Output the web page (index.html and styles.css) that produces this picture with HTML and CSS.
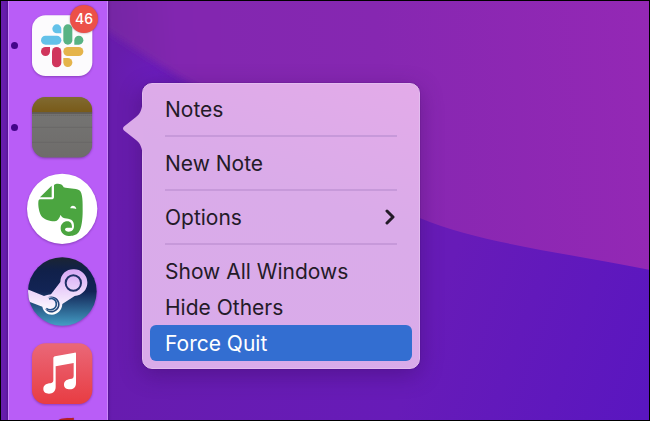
FILE: index.html
```html
<!DOCTYPE html>
<html lang="en">
<head>
<meta charset="utf-8">
<title>Desktop</title>
<link rel="stylesheet" href="styles.css">
</head>
<body>
<main class="desktop">
  <svg class="wallpaper" viewBox="0 0 650 421" preserveAspectRatio="none" aria-hidden="true">
    <defs>
      <linearGradient id="low" gradientUnits="userSpaceOnUse" x1="100" y1="200" x2="650" y2="400">
        <stop offset="0" stop-color="#671cac"/><stop offset="0.6" stop-color="#671bb8"/><stop offset="1" stop-color="#5a16c0"/>
      </linearGradient>
      <linearGradient id="high" gradientUnits="userSpaceOnUse" x1="100" y1="40" x2="650" y2="0">
        <stop offset="0" stop-color="#7326a2"/><stop offset="0.14" stop-color="#8227b0"/><stop offset="0.5" stop-color="#8627b1"/><stop offset="1" stop-color="#9428b5"/>
      </linearGradient>
      <radialGradient id="glow"><stop offset="0" stop-color="#6a1cba"/><stop offset="1" stop-color="#6a1cba" stop-opacity="0"/></radialGradient>
      <filter id="soft" x="-10%" y="-10%" width="120%" height="120%"><feGaussianBlur stdDeviation="4"/></filter>
    </defs>
    <rect width="650" height="421" fill="url(#low)"/>
    <ellipse cx="155" cy="72" rx="45" ry="35" fill="url(#glow)"/>
    <path d="M60 5C105 25 145 58 200 88C280 150 360 185 390 195L660 200V-30H60Z" fill="url(#high)" filter="url(#soft)"/>
    <path d="M220 80C290 150 360 190 420 218C480 243 560 252 650 270V0H220Z" fill="url(#high)"/>
  </svg>

  <nav class="dock" aria-label="Dock">
    <a class="app" href="#" aria-label="Slack">
      <span class="dot"></span>
      <svg class="icon" viewBox="63 12 246 246">
        <rect x="96" y="46" width="181" height="182" rx="41" fill="#fcfbfd"/>
        <g fill="#63c1e9"><path d="M184 100H170.500A13.500 13.500 0 1 1 184 86.500Z"/><rect x="123" y="107" width="61" height="27" rx="13.500"/></g>
        <g fill="#58b384"><rect x="190" y="73" width="27" height="61" rx="13.500"/><path d="M223 134V120.500A13.500 13.500 0 1 1 236.500 134Z"/></g>
        <g fill="#e5b44b"><rect x="190" y="141" width="60" height="27" rx="13.500"/><path d="M190 174H203.500A13.500 13.500 0 1 1 190 187.500Z"/></g>
        <g fill="#d0355c"><rect x="156" y="141" width="28" height="61" rx="14"/><path d="M150 141V154.500A13.500 13.500 0 1 1 136.500 141Z"/></g>
      </svg>
      <span class="badge">46</span>
    </a>
    <a class="app" href="#" aria-label="Notes">
      <span class="dot"></span>
      <svg class="icon" viewBox="63 3 246 246">
        <defs>
          <clipPath id="note"><rect x="96" y="36" width="181" height="182" rx="41"/></clipPath>
          <linearGradient id="brown" x1="0" y1="0" x2="0" y2="1"><stop offset="0" stop-color="#806a31"/><stop offset="1" stop-color="#795a18"/></linearGradient>
          <linearGradient id="paper" x1="0" y1="0" x2="0" y2="1"><stop offset="0" stop-color="#777776"/><stop offset="1" stop-color="#6e6c6a"/></linearGradient>
        </defs>
        <g clip-path="url(#note)">
          <rect x="96" y="36" width="181" height="182" fill="url(#paper)"/>
          <rect x="96" y="36" width="181" height="46" fill="url(#brown)"/>
          <path d="M96 84H277" stroke="#5d5751" stroke-width="4"/>
          <path d="M98 91H277" stroke="#62605f" stroke-width="3" stroke-dasharray="3 3"/>
          <path d="M96 127H277M96 172H277" stroke="#656463" stroke-width="2"/>
        </g>
      </svg>
    </a>
    <a class="app" href="#" aria-label="Evernote">
      <span class="dot off"></span>
      <svg class="icon" viewBox="63 9 246 246">
        <circle cx="186.500" cy="131.500" r="105.500" fill="#fff"/>
        <path fill="#4ba540" d="M120 97L155 62V97ZM162 60C168 54 187 54 191 67C205 71 226 69 238 76C249 84 248 116 248 138C248 163 245 190 236 202C229 212 216 213 206 213C191 213 182 202 182 190C182 177 191 169 202 169C212 169 216 176 216 188H205C198 188 195 190 195 193C195 198 200 200 206 200C217 200 222 193 222 183C222 164 209 161 194 160C187 158 184 154 182 149C178 160 173 168 165 169C153 170 132 164 124 153C117 143 114 122 115 112C115 107 117 103 120 103H154C159 103 162 101 162 96Z"/>
        <path fill="#fff" d="M211 130C211 119 227 119 229 132C222 129 217 129 211 130Z"/>
      </svg>
    </a>
    <a class="app" href="#" aria-label="Steam">
      <span class="dot off"></span>
      <svg class="icon" viewBox="63 0 246 246">
        <defs>
          <linearGradient id="sea" x1="0" y1="0" x2="0" y2="1"><stop offset="0" stop-color="#1b2532"/><stop offset="0.2" stop-color="#10204a"/><stop offset="0.5" stop-color="#122455"/><stop offset="1" stop-color="#449dc5"/></linearGradient>
          <linearGradient id="arm" gradientUnits="userSpaceOnUse" x1="0" y1="58" x2="0" y2="190"><stop offset="0" stop-color="#d7a8f5"/><stop offset="1" stop-color="#fff"/></linearGradient>
          <clipPath id="disc"><circle cx="187" cy="124.500" r="103"/></clipPath>
        </defs>
        <circle cx="187" cy="124.500" r="103" fill="url(#sea)"/>
        <g clip-path="url(#disc)" fill="url(#arm)">
          <path d="M80 117L132 138C142 134 149 135 153 133L181 96C182 72 199 58 220 58A40 40 0 0 1 224 138L187 162C186 180 173 194 156 194C140 194 130 184 127 170L80 152Z"/>
          <circle cx="220" cy="99" r="23" fill="none" stroke="#203167" stroke-width="6"/>
          <path d="M134 175C140 186 150 190 162 186C179 180 184 161 173 148C165 138 152 138 142 142C160 139 174 150 174 163C174 182 151 190 134 175Z" fill="#244579"/>
          <path d="M139 175C151 184 169 177 169 162C169 148 156 143 147 147" fill="none" stroke="#275386" stroke-width="5"/>
        </g>
      </svg>
    </a>
    <a class="app" href="#" aria-label="Music">
      <span class="dot off"></span>
      <svg class="icon" viewBox="63 -9 246 246">
        <defs><linearGradient id="red" x1="0" y1="0" x2="0" y2="1"><stop offset="0" stop-color="#ea6878"/><stop offset="1" stop-color="#e83c42"/></linearGradient></defs>
        <rect x="96" y="25" width="181" height="182" rx="41" fill="url(#red)"/>
        <path fill="#fff" d="M160 70C160 67 162 65 165 64L224 53C227 52 228 54 228 57V144C228 157 220 163 210 163C199 163 192 158 192 149C192 138 200 134 210 132C218 131 221 129 221 122V84L167 94V156C167 169 158 176 147 176C137 176 130 171 130 162C130 151 138 147 148 145C157 143 160 142 160 134Z"/>
      </svg>
    </a>
    <a class="app" href="#" aria-label="App">
      <span class="dot off"></span>
      <svg class="icon" viewBox="63 237 246 246">
        <path fill="#b51f25" d="M174 256C184 247 204 250 221 248C224 256 216 270 200 276Z"/>
      </svg>
    </a>
  </nav>

  <div class="menu" role="menu" aria-label="Notes">
    <svg class="tail" viewBox="0 0 21 58" aria-hidden="true">
      <path d="M21 0C20 10 19 14 14 18L2 27.500Q0 29.500 2 31.500L14 41C19 45 20 49 21 58Z"/>
    </svg>
    <button class="item" role="menuitem">Notes</button>
    <hr class="line">
    <button class="item" role="menuitem">New Note</button>
    <hr class="line">
    <button class="item" role="menuitem">Options
      <svg class="chevron" viewBox="0 0 10 16" aria-hidden="true"><path d="M2 2L8 8L2 14"/></svg>
    </button>
    <hr class="line">
    <button class="item" role="menuitem">Show All Windows</button>
    <button class="item" role="menuitem">Hide Others</button>
    <button class="item selected" role="menuitem">Force Quit</button>
  </div>
</main>
</body>
</html>
```
FILE: styles.css
```css
* {
  box-sizing: border-box;
}

body {
  margin: 0;
  font-family: Inter, "Liberation Sans", sans-serif;
}

.desktop {
  position: relative;
  display: flex;
  align-items: flex-start;
  height: 100vh;
  padding-left: 7px;
  border: 1px solid #000;
  overflow: hidden;
  background: #651da6;
}

.wallpaper {
  position: absolute;
  inset: 0;
  width: 100%;
  height: 100%;
}

.dock {
  position: relative;
  flex: none;
  padding: 3px 4px 0 2px;
  border: solid #cb88fa;
  border-width: 0 1px;
  background: #b95df7;
  box-shadow: 0 0 3px rgba(40, 0, 80, 0.6);
}

.app {
  position: relative;
  display: flex;
  align-items: center;
  gap: 3px;
  text-decoration: none;
}

.dot {
  width: 7px;
  height: 7px;
  border-radius: 50%;
  background: #43058a;
}

.dot.off {
  background: none;
}

.icon {
  width: 82px;
  height: 82px;
  filter: drop-shadow(0 1px 1px rgba(50, 0, 80, 0.35));
}

.badge {
  position: absolute;
  top: 1px;
  right: 5px;
  width: 28px;
  height: 28px;
  border-radius: 50%;
  background: #ec5048;
  box-shadow: 0 0 2px rgba(60, 0, 40, 0.5);
  color: #fff;
  font-size: 14px;
  font-weight: 500;
  line-height: 28px;
  text-align: center;
}

.menu {
  position: relative;
  display: flex;
  flex-direction: column;
  width: 278px;
  margin: 82px 0 0 34px;
  padding: 7px;
  border: 1px solid #e3bcef;
  border-radius: 10px;
  background: linear-gradient(20deg, #d9abea 0%, #daabe9 60%, #e3abe9 100%);
  box-shadow: 0 0 1px rgba(40, 0, 70, 0.8), 0 6px 22px rgba(50, 10, 80, 0.35);
}

.tail {
  position: absolute;
  top: 15px;
  left: -21px;
  width: 21px;
  height: 58px;
  fill: #dbabe9;
}

.item {
  display: flex;
  align-items: center;
  justify-content: space-between;
  height: 36px;
  padding: 0 17px 0 15px;
  border: 0;
  border-radius: 6px;
  background: none;
  color: #241a28;
  font: inherit;
  font-size: 21px;
  text-align: left;
}

.item.selected {
  background: #336ed1;
  color: #fff;
}

.line {
  height: 2px;
  margin: 8px 15px;
  border: 0;
  background: #c799da;
}

.chevron {
  width: 10px;
  height: 16px;
  fill: none;
  stroke: #241a28;
  stroke-width: 3;
  stroke-linecap: round;
  stroke-linejoin: round;
}
```
